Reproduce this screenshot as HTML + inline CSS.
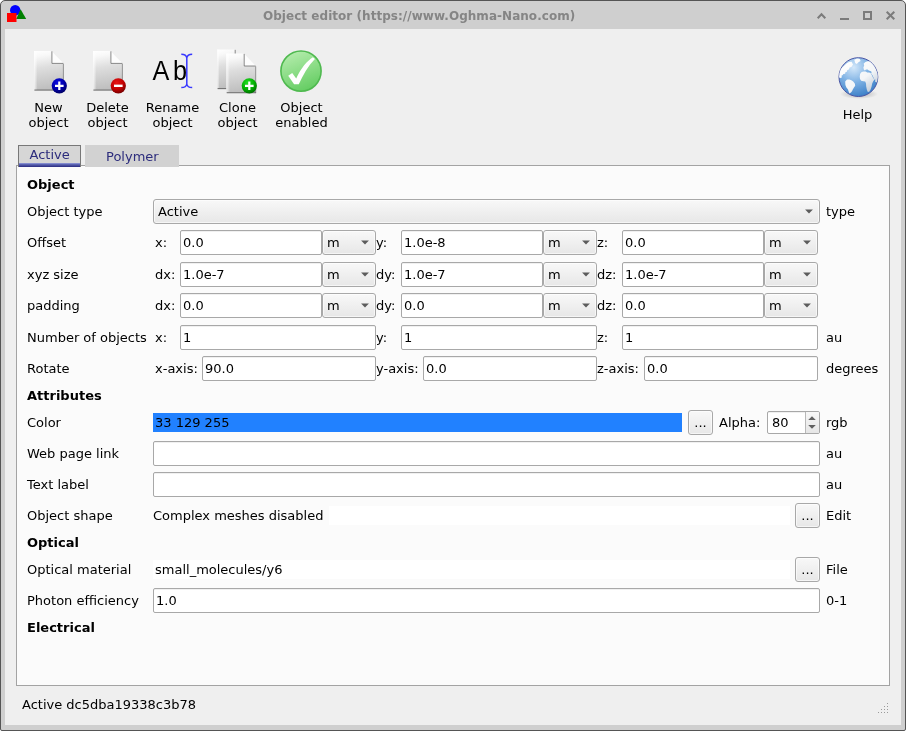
<!DOCTYPE html><html><head><meta charset="utf-8"><title>Object editor</title><style>
*{margin:0;padding:0;box-sizing:border-box}
html,body{width:906px;height:731px;overflow:hidden;background:#fff}
body{font-family:"DejaVu Sans","Liberation Sans",sans-serif;font-size:13px;line-height:15px;color:#000;position:relative}
.abs,.t,.le,.cb,.pb,.sec{position:absolute}
#root{position:absolute;left:0;top:0;width:906px;height:731px;will-change:transform}
#win{position:absolute;left:0;top:0;width:906px;height:731px;background:#cfcfcf;border:1px solid #555;border-radius:5px 5px 2px 2px}
#content{position:absolute;left:5px;top:29px;width:896px;height:696px;background:#efefef}
#title{position:absolute;left:0;top:9px;width:838px;text-align:center;font-weight:bold;font-size:12px;line-height:15px;color:#858585;white-space:nowrap}
.t{white-space:nowrap}
.b{font-weight:bold}
.c{text-align:center}
.le{background:#fff;border:1px solid #a8a8a8;border-radius:2px;height:25px;box-shadow:inset 0 1px 0 rgba(0,0,0,0.06)}
.le span{position:absolute;left:2px;top:4px;white-space:nowrap}
.cb{border:1px solid #a8a8a8;border-radius:3px;height:25px;background:linear-gradient(#f8f8f8,#e7e7e7);box-shadow:inset 0 0 0 1px rgba(255,255,255,0.6)}
.cb span{position:absolute;left:4px;top:4px;white-space:nowrap}
.cb svg{position:absolute;right:5px;top:9px}
.pb{border:1px solid #a8a8a8;border-radius:3px;height:25px;width:24px;background:linear-gradient(#f8f8f8,#e7e7e7);box-shadow:inset 0 0 0 1px rgba(255,255,255,0.6);text-align:center}
.pb span{position:absolute;left:0;right:0;top:4px;text-align:center}
.ro{background:#fff;height:19px}
#pane{position:absolute;left:16px;top:165px;width:874px;height:521px;background:#fbfbfb;border:1px solid #a3a3a3}
</style></head><body>
<div id="win"></div>
<div id="root">
<div id="title" style="left:263px;width:auto;text-align:left;letter-spacing:0.04px">Object editor (https://www.Oghma-Nano.com)</div>
<svg class="abs" style="left:5px;top:3px" width="24" height="22" viewBox="5 3 24 22">
<circle cx="15.2" cy="10.2" r="5.2" fill="#0000ff"/>
<polygon points="20.6,9.2 26.2,19 16.2,19" fill="#008000"/>
<rect x="7" y="13" width="9.5" height="9" fill="#ff0000"/>
</svg>
<svg class="abs" style="left:810px;top:5px" width="92" height="20" viewBox="810 5 92 20" fill="none" stroke="#7b7b7b" stroke-width="2">
<polyline points="817.7,18.3 821.5,14.3 825.3,18.3"/>
<line x1="840" y1="19" x2="849" y2="19"/>
<rect x="864" y="12" width="7" height="7"/>
<line x1="886.7" y1="11.7" x2="894.3" y2="19.3"/><line x1="894.3" y1="11.7" x2="886.7" y2="19.3"/>
</svg>
<div id="content"></div>
<div class="t c" style="left:-11.5px;width:120px;top:100px">New</div>
<div class="t c" style="left:-11.5px;width:120px;top:115px">object</div>
<div class="t c" style="left:47.5px;width:120px;top:100px">Delete</div>
<div class="t c" style="left:47.5px;width:120px;top:115px">object</div>
<div class="t c" style="left:112.5px;width:120px;top:100px">Rename</div>
<div class="t c" style="left:112.5px;width:120px;top:115px">object</div>
<div class="t c" style="left:177.5px;width:120px;top:100px">Clone</div>
<div class="t c" style="left:177.5px;width:120px;top:115px">object</div>
<div class="t c" style="left:241.5px;width:120px;top:100px">Object</div>
<div class="t c" style="left:241.5px;width:120px;top:115px">enabled</div>
<div class="t c" style="left:797.5px;width:120px;top:107px">Help</div>
<svg class="abs" style="left:24px;top:44px" width="320" height="56" viewBox="24 44 320 56">
<defs>
<linearGradient id="pg" x1="0" y1="0" x2="0.12" y2="1"><stop offset="0" stop-color="#ffffff"/><stop offset="0.15" stop-color="#f8f8f8"/><stop offset="0.45" stop-color="#dedede"/><stop offset="1" stop-color="#bfbfbf"/></linearGradient>
<linearGradient id="pgh" x1="0" y1="0" x2="1" y2="0"><stop offset="0" stop-color="#fff" stop-opacity="0.8"/><stop offset="0.12" stop-color="#fff" stop-opacity="0"/></linearGradient>
<radialGradient id="bl" cx="0.4" cy="0.3" r="0.8"><stop offset="0" stop-color="#0c0ce0"/><stop offset="0.5" stop-color="#0000b0"/><stop offset="1" stop-color="#000050"/></radialGradient>
<radialGradient id="rd" cx="0.4" cy="0.3" r="0.8"><stop offset="0" stop-color="#e81414"/><stop offset="0.55" stop-color="#c00000"/><stop offset="1" stop-color="#600000"/></radialGradient>
<radialGradient id="gn" cx="0.4" cy="0.3" r="0.8"><stop offset="0" stop-color="#20e020"/><stop offset="0.6" stop-color="#00a800"/><stop offset="1" stop-color="#005800"/></radialGradient>
<linearGradient id="ck" x1="0.3" y1="0" x2="0.7" y2="1"><stop offset="0" stop-color="#b4ecac"/><stop offset="1" stop-color="#62cc60"/></linearGradient>
<g id="page">
<path d="M0,0 H17.5 V12.5 H29.5 V39 H0 Z" fill="url(#pg)"/>
<path d="M0,0 H17.5 V12.5 H29.5 V39 H0 Z" fill="url(#pgh)"/>
<path d="M17.5,0 L29.5,12.5 H17.5 Z" fill="#fdfdfd"/>
<path d="M17.9,0.3 V12.4 H29.3" fill="none" stroke="#5c5c5c" stroke-width="0.9" opacity="0.8"/>
<path d="M29.4,12.8 V39" fill="none" stroke="#6c6c6c" stroke-width="0.9" opacity="0.75"/>
<path d="M0.4,39.1 H29.8" fill="none" stroke="#5e5e5e" stroke-width="1.1" opacity="0.85"/>
</g>
</defs>
<use href="#page" x="34" y="51"/>
<circle cx="59.3" cy="85.8" r="7.6" fill="url(#bl)"/>
<path d="M55,85.8 H63.6 M59.3,81.5 V90.1" stroke="#fff" stroke-width="2.2"/>
<use href="#page" x="93" y="51"/>
<circle cx="118.3" cy="85.8" r="7.6" fill="url(#rd)"/>
<path d="M114,85.8 H122.6" stroke="#fff" stroke-width="2.4"/>
<!-- rename -->
<text transform="translate(152.6,80) scale(0.895,1)" font-family="Liberation Sans, sans-serif" font-size="28.2" letter-spacing="4" fill="#000">Ab</text>
<path d="M181.3,54.3 Q186.2,54.3 186.8,58 Q187.4,54.3 192.2,54.3 M186.8,57 V85 M181.3,87.6 Q186.2,87.6 186.8,84 Q187.4,87.6 192.2,87.6" fill="none" stroke="#3838ff" stroke-width="1.5"/>
<!-- clone -->
<g>
<path d="M217.3,49.5 H235.6 V88.5 H217.3 Z" fill="url(#pg)"/>
<path d="M217.3,49.5 H235.6 V88.5 H217.3 Z" fill="url(#pgh)"/>
<path d="M235.2,49.8 V54" stroke="#5c5c5c" stroke-width="0.9" opacity="0.8"/>
<path d="M217.6,88.6 H227" stroke="#5e5e5e" stroke-width="1.1" opacity="0.85"/>
</g>
<use href="#page" x="226.3" y="53.6" transform="translate(0,0)"/>
<circle cx="249.3" cy="85.8" r="7.6" fill="url(#gn)"/>
<path d="M245,85.8 H253.6 M249.3,81.5 V90.1" stroke="#fff" stroke-width="2.2"/>
<!-- check -->
<circle cx="301" cy="71.1" r="20.1" fill="url(#ck)" stroke="#4fb94f" stroke-width="1.6"/>
<path d="M288.2,75.8 L292.2,73.0 L296.2,78.6 C301,68 307,61 312.9,57.3 L314.9,59 C308,66 303,75 298.8,84.3 L294.1,84.3 Z" fill="#fff"/>
</svg>
<svg class="abs" style="left:832px;top:50px" width="56" height="56" viewBox="832 50 56 56">
<defs>
<radialGradient id="gl" cx="0.38" cy="0.25" r="0.85"><stop offset="0" stop-color="#d4e8fa"/><stop offset="0.45" stop-color="#7fb2e4"/><stop offset="1" stop-color="#2f76c2"/></radialGradient>
<radialGradient id="sh" cx="0.5" cy="0.5" r="0.5"><stop offset="0" stop-color="#000" stop-opacity="0.28"/><stop offset="1" stop-color="#000" stop-opacity="0"/></radialGradient>
<linearGradient id="ld" gradientUnits="userSpaceOnUse" x1="845" y1="60" x2="872" y2="94"><stop offset="0" stop-color="#ffffff"/><stop offset="0.6" stop-color="#f4f6f8"/><stop offset="1" stop-color="#b9c4d2"/></linearGradient>
<clipPath id="gc"><circle cx="858.4" cy="77.1" r="19.3"/></clipPath>
</defs>
<ellipse cx="859" cy="94" rx="19" ry="5" fill="url(#sh)"/>
<circle cx="858.4" cy="77.1" r="19.4" fill="url(#gl)" stroke="#4a55a4" stroke-width="1"/>
<g clip-path="url(#gc)" fill="url(#ld)">
<path d="M838,76 L839,70 L843.2,66.6 L846.5,63.6 L849,62 L851.6,61.8 L853,64.6 L851.4,67 L849.6,67.6 L849,69.4 L847.4,70 L846.8,71.8 L845.2,72.4 L845.2,73.8 L843.4,74 L842.6,75.2 L841.6,75.4 L841.8,77.4 L840.4,78 L839,77.6 Z"/>
<path d="M854.3,59.8 L857,58.6 L859.8,59 L860.6,61 L858.4,62.2 L856.8,64 L855.2,63 Z"/>
<path d="M845.2,81.6 L847,79.6 L849.4,79.4 L851.4,80.2 L853.2,81.6 L854.8,83.4 L855.2,85.8 L854,87.6 L852.8,89.4 L852,91.2 L851,92.6 L849.4,93.6 L848.6,91.6 L848,89.4 L846.4,87.4 L845.4,85 Z"/>
<path d="M863.4,67.4 L864.2,65.4 L863.6,63.8 L865.4,62 L867.4,61.2 L869.4,61.2 L871.6,62.6 L873.6,64.6 L875.4,67.6 L877,71 L878,75 L877,79 L874.6,79.8 L873.4,77.6 L872.6,75.4 L871.4,73.8 L870.6,72.6 L872.2,72.4 L870.8,71.2 L868.8,70.6 L867.6,69.4 L866,69.6 L864.8,70.4 L863.8,69.4 Z"/>
<path d="M859.7,76.4 L860.2,73.8 L861.6,72 L863.6,71.4 L865.6,71.6 L867.2,72.4 L869.4,72.6 L871,73.6 L872,75.6 L873.2,78 L874.6,79.4 L873.2,81.2 L872.2,83.6 L871.6,86.4 L870.6,89.6 L869.2,91.8 L867.8,92 L866.8,89.6 L866.2,86.6 L866,83.6 L865.2,81.6 L863.2,81.2 L861.2,80.8 L860,79 Z"/>
<path d="M874.4,72.6 L876.6,72.2 L879,75 L878.6,79 L876.8,82.4 L875,81.6 L875.4,79.4 L874.6,76 Z"/>
</g>
</svg>
<div id="pane"></div>
<div class="abs" style="left:85px;top:145px;width:94px;height:22px;background:#d2d2d2"></div>
<div class="abs" style="left:18px;top:145px;width:63px;height:22px;background:#d6d6d6;border:1px solid #787878;border-bottom:none"></div>
<div class="abs" style="left:19px;top:163px;width:61px;height:4px;background:linear-gradient(#969edc,#5a62b0 38%,#2a2a80)"></div>
<div class="t " style="left:29.5px;top:147px;color:#2c2c7c">Active</div>
<div class="t " style="left:106px;top:149px;color:#2c2c7c">Polymer</div>
<div class="t b" style="left:27px;top:177px;">Object</div>
<div class="t b" style="left:27px;top:388px;">Attributes</div>
<div class="t b" style="left:27px;top:535px;">Optical</div>
<div class="t b" style="left:27px;top:620px;">Electrical</div>
<div class="t " style="left:27px;top:204px;">Object type</div>
<div class="cb" style="left:153px;top:199px;width:667px"><span>Active</span><svg width="10" height="6" viewBox="0 0 10 6"><path d="M1.1,0.5 L8.9,0.5 L5,4.4 Z" fill="#5c5c5c"/></svg></div>
<div class="t " style="left:826px;top:204px;">type</div>
<div class="t " style="left:27px;top:235px;">Offset</div>
<div class="t " style="left:155px;top:235px;">x:</div>
<div class="le" style="left:180px;top:230px;width:142px"><span>0.0</span></div>
<div class="cb" style="left:322px;top:230px;width:54px"><span>m</span><svg width="10" height="6" viewBox="0 0 10 6"><path d="M1.1,0.5 L8.9,0.5 L5,4.4 Z" fill="#5c5c5c"/></svg></div>
<div class="t " style="left:376px;top:235px;">y:</div>
<div class="le" style="left:401px;top:230px;width:142px"><span>1.0e-8</span></div>
<div class="cb" style="left:543px;top:230px;width:54px"><span>m</span><svg width="10" height="6" viewBox="0 0 10 6"><path d="M1.1,0.5 L8.9,0.5 L5,4.4 Z" fill="#5c5c5c"/></svg></div>
<div class="t " style="left:597px;top:235px;">z:</div>
<div class="le" style="left:622px;top:230px;width:142px"><span>0.0</span></div>
<div class="cb" style="left:764px;top:230px;width:54px"><span>m</span><svg width="10" height="6" viewBox="0 0 10 6"><path d="M1.1,0.5 L8.9,0.5 L5,4.4 Z" fill="#5c5c5c"/></svg></div>
<div class="t " style="left:27px;top:267px;">xyz size</div>
<div class="t " style="left:155px;top:267px;">dx:</div>
<div class="le" style="left:180px;top:262px;width:142px"><span>1.0e-7</span></div>
<div class="cb" style="left:322px;top:262px;width:54px"><span>m</span><svg width="10" height="6" viewBox="0 0 10 6"><path d="M1.1,0.5 L8.9,0.5 L5,4.4 Z" fill="#5c5c5c"/></svg></div>
<div class="t " style="left:376px;top:267px;">dy:</div>
<div class="le" style="left:401px;top:262px;width:142px"><span>1.0e-7</span></div>
<div class="cb" style="left:543px;top:262px;width:54px"><span>m</span><svg width="10" height="6" viewBox="0 0 10 6"><path d="M1.1,0.5 L8.9,0.5 L5,4.4 Z" fill="#5c5c5c"/></svg></div>
<div class="t " style="left:597px;top:267px;">dz:</div>
<div class="le" style="left:622px;top:262px;width:142px"><span>1.0e-7</span></div>
<div class="cb" style="left:764px;top:262px;width:54px"><span>m</span><svg width="10" height="6" viewBox="0 0 10 6"><path d="M1.1,0.5 L8.9,0.5 L5,4.4 Z" fill="#5c5c5c"/></svg></div>
<div class="t " style="left:27px;top:298px;">padding</div>
<div class="t " style="left:155px;top:298px;">dx:</div>
<div class="le" style="left:180px;top:293px;width:142px"><span>0.0</span></div>
<div class="cb" style="left:322px;top:293px;width:54px"><span>m</span><svg width="10" height="6" viewBox="0 0 10 6"><path d="M1.1,0.5 L8.9,0.5 L5,4.4 Z" fill="#5c5c5c"/></svg></div>
<div class="t " style="left:376px;top:298px;">dy:</div>
<div class="le" style="left:401px;top:293px;width:142px"><span>0.0</span></div>
<div class="cb" style="left:543px;top:293px;width:54px"><span>m</span><svg width="10" height="6" viewBox="0 0 10 6"><path d="M1.1,0.5 L8.9,0.5 L5,4.4 Z" fill="#5c5c5c"/></svg></div>
<div class="t " style="left:597px;top:298px;">dz:</div>
<div class="le" style="left:622px;top:293px;width:142px"><span>0.0</span></div>
<div class="cb" style="left:764px;top:293px;width:54px"><span>m</span><svg width="10" height="6" viewBox="0 0 10 6"><path d="M1.1,0.5 L8.9,0.5 L5,4.4 Z" fill="#5c5c5c"/></svg></div>
<div class="t " style="left:27px;top:330px;">Number of objects</div>
<div class="t " style="left:155px;top:330px;">x:</div>
<div class="le" style="left:180px;top:325px;width:196px"><span>1</span></div>
<div class="t " style="left:376px;top:330px;">y:</div>
<div class="le" style="left:401px;top:325px;width:196px"><span>1</span></div>
<div class="t " style="left:597px;top:330px;">z:</div>
<div class="le" style="left:622px;top:325px;width:196px"><span>1</span></div>
<div class="t " style="left:826px;top:330px;">au</div>
<div class="t " style="left:27px;top:361px;">Rotate</div>
<div class="t " style="left:155px;top:361px;">x-axis:</div>
<div class="le" style="left:202px;top:356px;width:174px"><span>90.0</span></div>
<div class="t " style="left:376px;top:361px;">y-axis:</div>
<div class="le" style="left:423px;top:356px;width:174px"><span>0.0</span></div>
<div class="t " style="left:597px;top:361px;">z-axis:</div>
<div class="le" style="left:644px;top:356px;width:174px"><span>0.0</span></div>
<div class="t " style="left:826px;top:361px;">degrees</div>
<div class="t " style="left:27px;top:415px;">Color</div>
<div class="abs" style="left:153px;top:413px;width:529px;height:19px;background:#2181ff"></div>
<div class="t " style="left:155px;top:415px;">33 129 255</div>
<div class="pb" style="left:688px;top:410px;width:25px"><span>...</span></div>
<div class="t " style="left:719px;top:415px;">Alpha:</div>
<div class="le" style="left:767px;top:411px;width:53px;height:23px"><span style="left:4px;top:3px">80</span><div style="position:absolute;left:37px;top:0;width:14px;height:21px;border-left:1px solid #b8b8b8;background:linear-gradient(#f7f7f7,#e6e6e6);border-radius:0 1px 1px 0"></div></div>
<svg class="abs" style="left:806px;top:412px" width="13" height="21" viewBox="0 0 13 21"><path d="M2.2,8 L6,4.2 L9.8,8 Z M2.2,13 L6,16.8 L9.8,13 Z" fill="#606060"/></svg>
<div class="t " style="left:826px;top:415px;">rgb</div>
<div class="t " style="left:27px;top:446px;">Web page link</div>
<div class="le" style="left:153px;top:441px;width:667px"><span></span></div>
<div class="t " style="left:826px;top:446px;">au</div>
<div class="t " style="left:27px;top:477px;">Text label</div>
<div class="le" style="left:153px;top:472px;width:667px"><span></span></div>
<div class="t " style="left:826px;top:477px;">au</div>
<div class="t " style="left:27px;top:508px;">Object shape</div>
<div class="abs ro" style="left:329px;top:506px;width:461px"></div>
<div class="t " style="left:153px;top:508px;">Complex meshes disabled</div>
<div class="pb" style="left:795px;top:503px;width:25px"><span>...</span></div>
<div class="t " style="left:826px;top:508px;">Edit</div>
<div class="t " style="left:27px;top:562px;">Optical material</div>
<div class="abs ro" style="left:153px;top:560px;width:637px"></div>
<div class="t " style="left:155px;top:562px;">small_molecules/y6</div>
<div class="pb" style="left:795px;top:557px;width:25px"><span>...</span></div>
<div class="t " style="left:826px;top:562px;">File</div>
<div class="t " style="left:27px;top:593px;">Photon efficiency</div>
<div class="le" style="left:153px;top:588px;width:667px"><span>1.0</span></div>
<div class="t " style="left:826px;top:593px;">0-1</div>
<div class="t " style="left:22px;top:697px;">Active dc5dba19338c3b78</div>
<svg class="abs" style="left:870px;top:695px" width="25" height="25" viewBox="870 695 25 25"><rect x="887" y="703" width="1" height="1" fill="#9a9a9a"/><rect x="884" y="706" width="1" height="1" fill="#9a9a9a"/><rect x="887" y="706" width="1" height="1" fill="#9a9a9a"/><rect x="881" y="709" width="1" height="1" fill="#9a9a9a"/><rect x="884" y="709" width="1" height="1" fill="#9a9a9a"/><rect x="887" y="709" width="1" height="1" fill="#9a9a9a"/><rect x="878" y="712" width="1" height="1" fill="#9a9a9a"/><rect x="881" y="712" width="1" height="1" fill="#9a9a9a"/><rect x="884" y="712" width="1" height="1" fill="#9a9a9a"/><rect x="887" y="712" width="1" height="1" fill="#9a9a9a"/></svg>
</div></body></html>
